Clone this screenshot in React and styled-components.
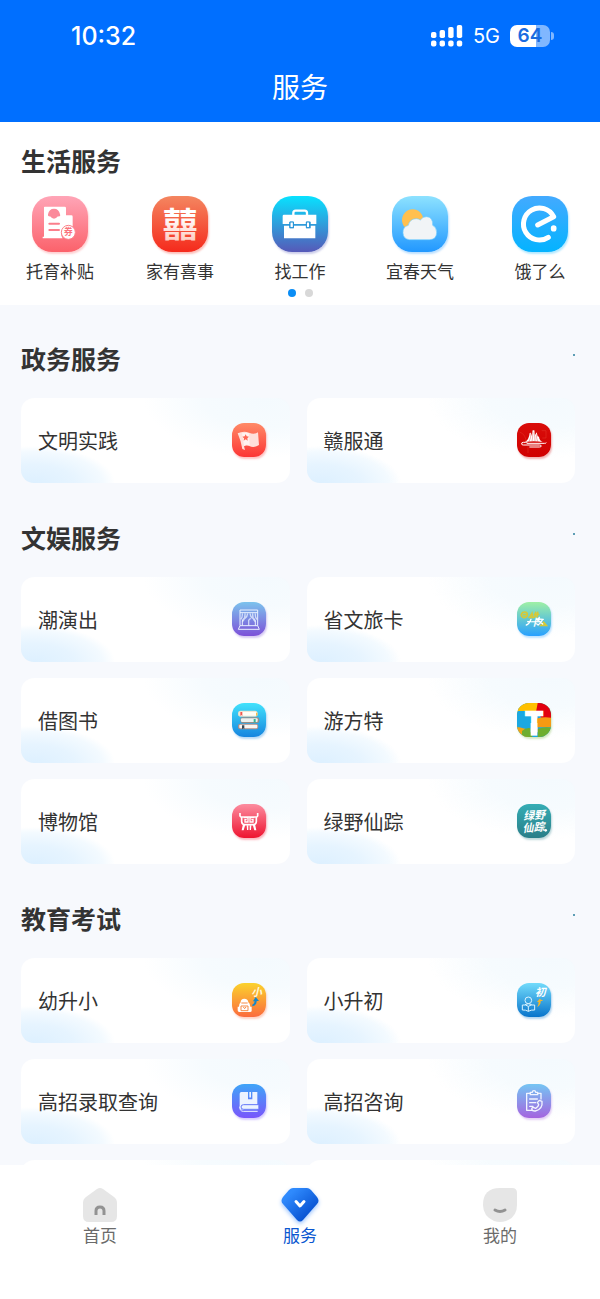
import React, { useState } from 'react';
import styled, { createGlobalStyle } from 'styled-components';

const GlobalStyle = createGlobalStyle`
  * {
    box-sizing: border-box;
  }

  body {
    margin: 0;
    color: #333;
    background: #f7f9fd;
    font-family: "Liberation Sans", "Noto Sans CJK SC", sans-serif;
  }

  button {
    border: 0;
    padding: 0;
    background: none;
    color: inherit;
    font: inherit;
    cursor: pointer;
  }
`;

const Screen = styled.div`
  display: flex;
  flex-direction: column;
  height: 100vh;
`;

const Header = styled.header`
  flex: none;
  padding-bottom: 13px;
  background: #006fff;
  color: #fff;
`;

const StatusBar = styled.div`
  display: flex;
  align-items: center;
  justify-content: space-between;
  height: 69px;
  padding: 3px 46px 0 71px;
  font-family: Inter, sans-serif;
`;

const Clock = styled.time`
  font-size: 25px;
  font-weight: 500;
`;

const StatusIcons = styled.div`
  display: flex;
  align-items: center;
  gap: 10px;
  font-size: 20px;
`;

const Battery = styled.span`
  display: flex;
  align-items: center;
  gap: 1px;

  &::after {
    content: '';
    width: 3px;
    height: 8px;
    border-radius: 0 4px 4px 0;
    background: #80b7ff;
  }
`;

const BatteryLevel = styled.span`
  width: 40px;
  border-radius: 7px;
  background: linear-gradient(90deg, #fff 64%, #80b7ff 64%);
  color: #1a6be0;
  font-size: 19px;
  font-weight: 600;
  line-height: 22px;
  text-align: center;
`;

const PageTitle = styled.h1`
  margin: 0;
  font-size: 28px;
  font-weight: 400;
  line-height: 40px;
  text-align: center;
`;

const Content = styled.main`
  flex: 1;
  min-height: 0;
  overflow-y: auto;
  scrollbar-width: none;
`;

const LifePanel = styled.section`
  margin-bottom: 36px;
  padding: 21px 0 8px;
  background: #fff;
`;

const SectionHead = styled.div`
  display: flex;
  align-items: center;
  justify-content: space-between;
  margin-bottom: ${props => (props.$tight ? '15px' : '19px')};
  padding: 0 25px 0 21px;
`;

const SectionTitle = styled.h2`
  margin: 0;
  font-size: 25px;
  font-weight: 700;
  line-height: 38px;
`;

const MoreDot = styled.span`
  width: 2px;
  height: 2px;
  margin-bottom: 10px;
  border-radius: 1px;
  background: #2a7f9c;
`;

const LifeGrid = styled.div`
  display: grid;
  grid-template-columns: repeat(5, 1fr);
`;

const LifeItem = styled.button`
  display: flex;
  flex-direction: column;
  align-items: center;
  gap: 9px;
  font-size: 17px;
  line-height: 24px;
`;

const Tile = styled.span`
  display: block;
  flex: none;
  width: ${props => (props.$large ? '56px' : '34px')};
  height: ${props => (props.$large ? '56px' : '34px')};
  border-radius: ${props => (props.$large ? '20px' : '12px')};
  background: linear-gradient(${props => props.$from}, ${props => props.$to});
  box-shadow: 1px 2px 2px ${props => props.$to}4d;
  overflow: hidden;

  svg {
    display: block;
    width: 100%;
    height: 100%;
  }
`;

const Pager = styled.div`
  display: flex;
  justify-content: center;
  gap: 9px;
  margin-top: 4px;
`;

const PagerDot = styled.span`
  width: 8px;
  height: 8px;
  border-radius: 50%;
  background: ${props => (props.$active ? '#0a8df5' : '#d8d8d8')};
`;

const Section = styled.section`
  margin-bottom: 37px;
`;

const CardGrid = styled.div`
  display: grid;
  grid-template-columns: 1fr 1fr;
  gap: 16px 17px;
  padding: 0 25px 0 21px;
`;

const Card = styled.button`
  display: flex;
  align-items: center;
  justify-content: space-between;
  height: 85px;
  padding: 0 24px 1px 17px;
  border-radius: 13px;
  background:
    radial-gradient(ellipse 82px 37px at 12px 100%, #ddf0ff 0%, #e6f4ff 50%, #f3faff 85%, #fff0 100%),
    radial-gradient(ellipse 120px 60px at 90% 0, #f4fafe 0%, #f6fbfe 50%, #fff0 100%),
    #fff;
  text-align: left;
`;

const CardName = styled.span`
  padding-top: 3px;
  font-size: 20px;
  line-height: 28px;
`;

const TabBar = styled.nav`
  display: grid;
  flex: none;
  grid-template-columns: repeat(3, 1fr);
  height: 134px;
  padding-top: 23px;
  background: #fff;
`;

const Tab = styled.button`
  display: flex;
  flex-direction: column;
  align-items: center;
  gap: 3px;
  color: ${props => (props.$active ? '#0b57d0' : '#6b6b6b')};
  font-size: 17px;
  line-height: 24px;

  svg {
    display: block;
    overflow: visible;
  }
`;

const CJK = '"Noto Sans CJK SC", sans-serif';

const SignalIcon = () => (
  <svg width="32" height="22" viewBox="0 0 32 22" fill="#fff">
    {[7, 5, 2, 0].map((top, i) => (
      <g key={top}>
        <rect x={i * 8.6} y={top} width="5.4" height={13 - top} rx="1.8" />
        <rect x={i * 8.6} y="15.5" width="5.4" height="6" rx="2" />
      </g>
    ))}
  </svg>
);

// Large drawings use a 168 grid, small ones a 102 grid.
const drawings = {
  subsidy: (
    <svg viewBox="0 0 168 168">
      <path d="M38 32h60q4 0 4 4v22h16q4 0 4 4v30a24 24 0 0 0-30 35H32v-5h4V34q0-2 2-2z" fill="#fff" />
      <path d="M48 55q3-17 18-17t18 17q3 7-6 6-12 14-24 0-8 1-6-6z" fill="#fb8a9b" />
      <path d="M52 83h29M52 102h29" stroke="#fb7f8c" strokeWidth="6" strokeLinecap="round" />
      <circle cx="109" cy="109" r="21" fill="#fff" stroke="#fb8089" strokeWidth="3" />
      <text x="109" y="118" textAnchor="middle" fontSize="26" fontWeight="700" fontFamily={CJK} fill="#fa747e">券</text>
    </svg>
  ),
  wedding: (
    <svg viewBox="0 0 168 168">
      <defs>
        <linearGradient id="joy" x1="0" y1="0" x2="0" y2="1">
          <stop offset=".4" stopColor="#fff" />
          <stop offset="1" stopColor="#ffc1b3" />
        </linearGradient>
      </defs>
      <text x="84" y="122" textAnchor="middle" fontSize="104" fontWeight="700" fontFamily={CJK} fill="url(#joy)">囍</text>
    </svg>
  ),
  job: (
    <svg viewBox="0 0 168 168">
      <path d="M64 57v-6q0-7 7-7h27q7 0 7 7v6" fill="none" stroke="#fff" strokeWidth="7" />
      <path d="M36 56h97v28h-17v-7h-14v7H66v-7H52v7H32V60q0-4 4-4z" fill="#fff" />
      <path d="M36 89h16v8h14v-8h36v8h14v-8h14v38H36z" fill="#fff" />
      <path d="M54 78h10v17H54zM103 78h10v17h-10z" fill="#fff" stroke="#188cd4" strokeWidth="3" />
    </svg>
  ),
  weather: (
    <svg viewBox="0 0 168 168">
      <circle cx="62" cy="72" r="32" fill="#ffc04f" />
      <path d="M52 131a22 22 0 0 1-3-43q4-20 24-20 6 0 12 4 7-10 18-10 20 0 19 26 12 6 12 21 0 22-22 22z" fill="#f1f4f6" stroke="#78d0ff" strokeWidth="2" />
    </svg>
  ),
  eleme: (
    <svg viewBox="0 0 168 168" fill="none" stroke="#fff" strokeLinecap="round">
      <path d="M77 87L125 62A48 48 0 1 0 109 124" strokeWidth="15" strokeLinejoin="round" />
      <path d="M125 96v2" strokeWidth="17" />
    </svg>
  ),
  flag: (
    <svg viewBox="0 0 102 102">
      <path d="M17 31q18-9 34-2 15 7 27-1l3 38q-15 10-29 3-9-4-16 1l3 11-8-3q-5-27-14-47z" fill="#ffe0da" />
      <path d="M30 31q12-4 21 0l2 36q-10-4-17 1z" fill="#fff" opacity=".6" />
      <path d="M41 34l3 6 7 1-5 5 1 7-6-4-6 4 1-7-5-5 7-1z" fill="#ff6654" />
    </svg>
  ),
  ganfutong: (
    <svg viewBox="0 0 102 102">
      <path d="M24 57q12-7 14-27l4-1 1 10 4-17h5l2 14 5-8 3 12 4 1q1 11 11 16-26-4-53 0z" fill="#fff" />
      <path d="M36 56q6-10 6-26M45 55q3-12 2-29M54 55q0-14-3-27M62 56q-4-12-4-22" fill="none" stroke="#d40808" strokeWidth="1" />
      <path d="M31 58H19q-6 0-5 5 0 3 5 3h48q6 0 6 3t-6 3H37M29 61h53q6 0 6-2" fill="none" stroke="#fff" strokeWidth="3" />
      <path d="M8 27q20 8 19 33M74 23h13v22H76M33 70v20" fill="none" stroke="#e94436" strokeWidth="2" opacity=".6" />
    </svg>
  ),
  show: (
    <svg viewBox="0 0 102 102" fill="none" stroke="#eaf1ff" strokeWidth="3">
      <path d="M24 71V24h53v47M24 32h53M24 71h53l5 11H19zM31 71V57q0-5 4-7M70 71V57q0-5-4-7" />
      <path d="M31 34q1 14-5 18M39 34q1 17-8 25M47 34q-1 10-8 15M70 34q-1 14 5 18M62 34q-1 17 8 25M54 34q1 10 8 15M50 71V55l6-6" strokeWidth="4" opacity=".75" />
    </svg>
  ),
  travelCard: (
    <svg viewBox="0 0 102 102" fill="none" strokeLinecap="round">
      <path d="M17 31q-7 7-2 13 7 6 14-1 5-8-2-12-7-3-12 3M20 38h7M39 44l6-10 2 10M36 46h15M56 31l-2 14M52 37h13M62 31l-2 14" stroke="#d6c936" strokeWidth="5" />
      <path d="M72 70l8-9 8 9z" stroke="#d6c936" strokeWidth="5" />
      <path d="M42 52q-6 15-14 17M32 59h10M67 46l-5 11M61 51l18 1M76 54q-5 10-13 15M66 57l11 9" stroke="#fff" strokeWidth="4" />
      <text x="53" y="71" textAnchor="middle" fontSize="29" fontWeight="700" fontStyle="italic" fontFamily={CJK} fill="#fff">卡</text>
    </svg>
  ),
  books: (
    <svg viewBox="0 0 102 102">
      <rect x="18" y="23" width="59" height="18" rx="8" fill="#e8dfc9" />
      <rect x="23" y="26" width="51" height="12" rx="3" fill="#fffdf5" />
      <rect x="25" y="43" width="57" height="17" rx="7" fill="#9b8d86" />
      <rect x="27" y="46" width="50" height="11" rx="3" fill="#edf2f0" />
      <rect x="18" y="62" width="61" height="17" rx="7" fill="#b28d85" />
      <rect x="22" y="65" width="54" height="11" rx="3" fill="#faf6f3" />
      <path d="M25 27h6v12l-3-3-3 3z" fill="#ee564c" />
      <path d="M65 48h6v12l-3-3-3 3z" fill="#32b69a" />
      <path d="M30 67h7v12l-3-3-4 3z" fill="#344857" />
      <path d="M72 29h4v9h-4z" fill="#f6bd47" />
    </svg>
  ),
  fantawild: (
    <svg viewBox="0 0 102 102">
      <rect width="102" height="102" fill="#1ba8e2" />
      <path d="M0 0h65l-5 24H0z" fill="#ffc000" />
      <path d="M62 0h40v46H74l-16-24z" fill="#e2000f" />
      <path d="M58 47q22-7 44-3v29H58z" fill="#f79a13" />
      <path d="M0 72q20 0 45 18v12H0z" fill="#f5a313" />
      <path d="M15 84q15-14 31-6v24H15zM62 78q20-8 40-4v28H62z" fill="#6eae2e" />
      <rect x="41" y="60" width="20" height="38" fill="#fff" />
      <text x="51" y="83" textAnchor="middle" fontSize="82" fontWeight="700" fontFamily='"Liberation Sans", sans-serif' fill="#fff" stroke="#fff" strokeWidth="7">T</text>
    </svg>
  ),
  museum: (
    <svg viewBox="0 0 102 102">
      <path d="M24 27v9q2 4 7 3h39q5 1 7-3v-9M29 39v14q1 9 9 9h26q8 0 9-9V39" fill="none" stroke="#fff" strokeWidth="5" />
      <path d="M35 41h13v13h-9v-7h5M67 41H54v13h9v-7h-5" fill="none" stroke="#fff" strokeWidth="4" />
      <path d="M33 60l7 2-5 17h-6zM69 60l-7 2 5 17h6zM44 64h5v14h-4zM53 64h5l-1 14h-4z" fill="#fff" />
    </svg>
  ),
  greenland: (
    <svg viewBox="0 0 102 102" fontWeight="700" fontFamily={CJK} fill="#fff">
      <g transform="rotate(-4 51 51)">
        <text x="53" y="46" textAnchor="middle" fontSize="33" fontStyle="italic">绿野</text>
        <text x="48" y="82" textAnchor="middle" fontSize="33" fontStyle="italic">仙踪</text>
      </g>
      <circle cx="86" cy="79" r="4" />
    </svg>
  ),
  primary: (
    <svg viewBox="0 0 102 102">
      <path d="M26 58q0-11 11-11t12 11q5 3 6 13h4v12q0 4-5 4H22q-5 0-5-5V71h4q0-9 5-13z" fill="#fff" />
      <path d="M28 60h19M27 69h21v14H27zM34 72l4 5 4-5" fill="none" stroke="#f58b47" strokeWidth="3" />
      <path d="M61 70q14-3 13-16h7L71 42l-8 13h5q0 7-7 10z" fill="#1686ca" />
      <text x="74" y="38" textAnchor="middle" fontSize="32" fontWeight="700" fontStyle="italic" fontFamily={CJK} fill="#fff7da">小</text>
    </svg>
  ),
  junior: (
    <svg viewBox="0 0 102 102">
      <circle cx="34" cy="52" r="10" fill="none" stroke="#d9f3ff" strokeWidth="3" />
      <path d="M34 70q-8-6-18-4v15q10-1 18 4 8-5 19-4V66q-11-2-19 4zM34 70v15M24 65q10-6 20 0" fill="none" stroke="#d9f3ff" strokeWidth="3" strokeLinejoin="round" />
      <path d="M60 72q12-6 11-18h8L68 47l-8 10h5q0 8-5 15z" fill="#f4b62c" />
      <text x="70" y="40" textAnchor="middle" fontSize="32" fontWeight="700" fontStyle="italic" fontFamily={CJK} fill="#fff">初</text>
    </svg>
  ),
  admission: (
    <svg viewBox="0 0 102 102">
      <path d="M23 29q0-5 5-5h20v22h13V24h15v53H30q-7 0-7-7z" fill="#edf3ff" />
      <path d="M52 24h5v18l-3-3-2 3z" fill="#edf3ff" />
      <path d="M79 62H35q-8 0-8 7t8 7h44" fill="#edf3ff" stroke="#6276f8" strokeWidth="3" />
      <path d="M23 68q0 14 11 14h43" fill="none" stroke="#edf3ff" strokeWidth="3" />
    </svg>
  ),
  advice: (
    <svg viewBox="0 0 102 102" fill="none" stroke="#f2f4ff" strokeWidth="4" strokeLinecap="round" strokeLinejoin="round">
      <path d="M39 28H29v51h15M62 28h10v17M40 32v-7h6q0-5 5-5t5 5h6v7zM38 45h23M38 56h18M38 67h10" />
      <path d="M67 49l8 3q3 23-20 29-9 1-11-6 1-5 5-5l7 3q9-5 9-12l-4-5z" />
    </svg>
  ),
};

const lifeServices = [
  { name: '托育补贴', icon: 'subsidy', from: '#ffa5b7', to: '#fb626b' },
  { name: '家有喜事', icon: 'wedding', from: '#f48660', to: '#f52a1c' },
  { name: '找工作', icon: 'job', from: '#08e2ff', to: '#5659b8' },
  { name: '宜春天气', icon: 'weather', from: '#8de2ff', to: '#2298ff' },
  { name: '饿了么', icon: 'eleme', from: '#43aaff', to: '#04b3ff' },
];

const groups = [
  {
    title: '政务服务',
    items: [
      { name: '文明实践', icon: 'flag', from: '#ff8a68', to: '#fc3535' },
      { name: '赣服通', icon: 'ganfutong', from: '#d90d0a', to: '#d00000' },
    ],
  },
  {
    title: '文娱服务',
    items: [
      { name: '潮演出', icon: 'show', from: '#7cc3ed', to: '#7c50d8' },
      { name: '省文旅卡', icon: 'travelCard', from: '#9ff0a5', to: '#28a0ff' },
      { name: '借图书', icon: 'books', from: '#42e2fc', to: '#1685df' },
      { name: '游方特', icon: 'fantawild', from: '#ffc000', to: '#6eae2e' },
      { name: '博物馆', icon: 'museum', from: '#fc8da0', to: '#ee1430' },
      { name: '绿野仙踪', icon: 'greenland', from: '#35adb5', to: '#2a7e88' },
    ],
  },
  {
    title: '教育考试',
    items: [
      { name: '幼升小', icon: 'primary', from: '#fbd22d', to: '#fb6b3d' },
      { name: '小升初', icon: 'junior', from: '#72dbfb', to: '#0874cb' },
      { name: '高招录取查询', icon: 'admission', from: '#3fa5f8', to: '#7956fb' },
      { name: '高招咨询', icon: 'advice', from: '#75c5f3', to: '#a464df' },
      {},
      {},
    ],
  },
];

const HomeIcon = () => (
  <svg width="34" height="34" viewBox="0 0 34 34">
    <path d="M14 1q3-2 6 0l11 8q3 2 3 6v13q0 6-6 6H6q-6 0-6-6V15q0-4 3-6z" fill="#e6e6e6" />
    <path d="M13 27v-4q0-4 4-4t4 4v4" fill="none" stroke="#929292" strokeWidth="3" />
  </svg>
);

const ServiceIcon = () => (
  <svg width="38" height="34" viewBox="0 0 38 34">
    <defs>
      <linearGradient id="gem" x1="0" y1="0" x2="1" y2="1">
        <stop offset=".2" stopColor="#2f8afd" />
        <stop offset=".8" stopColor="#0650d0" />
      </linearGradient>
    </defs>
    <path d="M12 0h14q2 0 4 2l6 7q3 4 0 7L22 32q-3 3-6 0L2 16q-3-3 0-7l6-7q2-2 4-2z" fill="url(#gem)" style={{ filter: 'drop-shadow(0 2px 2px #9bc4ff)' }} />
    <path d="M15 13.500l4 4.500 4-4.500" fill="none" stroke="#fff" strokeWidth="3" strokeLinecap="round" strokeLinejoin="round" />
  </svg>
);

const MineIcon = () => (
  <svg width="34" height="34" viewBox="0 0 34 34">
    <path d="M17 0h12q5 0 5 5v12q0 12-11 16-6 2-12 0Q0 28 0 17 0 0 17 0z" fill="#e6e6e6" />
    <path d="M12 22q5 3 10 0" fill="none" stroke="#929292" strokeWidth="3" strokeLinecap="round" />
  </svg>
);

const tabs = [
  { name: '首页', Icon: HomeIcon },
  { name: '服务', Icon: ServiceIcon },
  { name: '我的', Icon: MineIcon },
];

const ServiceTile = ({ item, large }) => (
  <Tile $large={large} $from={item.from} $to={item.to}>
    {drawings[item.icon]}
  </Tile>
);

const App = () => {
  const [activeTab, setActiveTab] = useState('服务');

  return (
    <Screen>
      <GlobalStyle />
      <Header>
        <StatusBar>
          <Clock>10:32</Clock>
          <StatusIcons>
            <SignalIcon />
            <span>5G</span>
            <Battery>
              <BatteryLevel>64</BatteryLevel>
            </Battery>
          </StatusIcons>
        </StatusBar>
        <PageTitle>服务</PageTitle>
      </Header>

      <Content>
        <LifePanel>
          <SectionHead $tight>
            <SectionTitle>生活服务</SectionTitle>
          </SectionHead>
          <LifeGrid>
            {lifeServices.map(item => (
              <LifeItem key={item.name}>
                <ServiceTile item={item} large />
                {item.name}
              </LifeItem>
            ))}
          </LifeGrid>
          <Pager>
            <PagerDot $active />
            <PagerDot />
          </Pager>
        </LifePanel>

        {groups.map(group => (
          <Section key={group.title}>
            <SectionHead>
              <SectionTitle>{group.title}</SectionTitle>
              <MoreDot />
            </SectionHead>
            <CardGrid>
              {group.items.map((item, i) => (
                <Card key={i}>
                  {item.name && <CardName>{item.name}</CardName>}
                  {item.icon && <ServiceTile item={item} />}
                </Card>
              ))}
            </CardGrid>
          </Section>
        ))}
      </Content>

      <TabBar>
        {tabs.map(({ name, Icon }) => (
          <Tab key={name} $active={name === activeTab} onClick={() => setActiveTab(name)}>
            <Icon />
            {name}
          </Tab>
        ))}
      </TabBar>
    </Screen>
  );
};

export default App;
